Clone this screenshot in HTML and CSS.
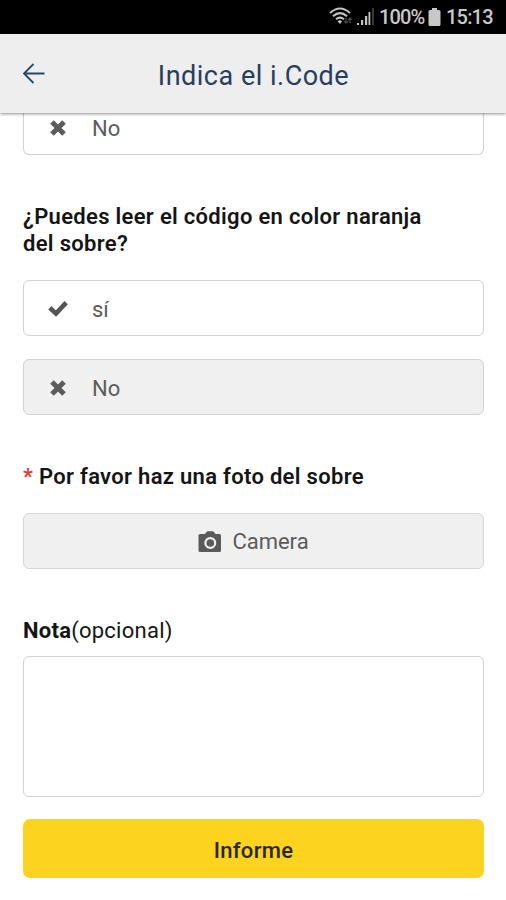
FILE: index.html
```html
<!DOCTYPE html>
<html lang="es">
<head>
<meta charset="utf-8">
<title>Indica el i.Code</title>
<link rel="stylesheet" href="styles.css">
</head>
<body>
<div class="status">
  <svg class="wifi" width="26" height="20" viewBox="0 0 26 20" fill="none" stroke="#c4c4c4" stroke-width="2">
    <path d="M1 6Q11 -3 21 6M4 9.300Q11 3 18 9.300M7 12.300Q11 9 15 12.300"/>
    <path d="M8.500 14.200Q11 12.500 13 14.200L11 17Z" fill="#c4c4c4" stroke="none"/>
    <path d="M17 11v5M15 14l2 2 2-2M21 16v-5M19 13l2-2 2 2" stroke="#444" stroke-width="1.300"/>
  </svg>
  <svg class="signal" width="19" height="18" viewBox="0 0 19 18">
    <path d="M1 15h2v2H1zM5 12h2.200v5H5zM9 8h2.200v9H9zM12.500 4h1.800v13h-1.800z" fill="#c4c4c4"/>
    <path d="M16 0h2v17h-2z" fill="#383838"/>
  </svg>
  <span class="percent">100%</span>
  <svg class="battery" width="13" height="18" viewBox="0 0 13 18" fill="#c8c8c8"><path d="M4 0h5v2h2q1.500 0 1.500 1.500v13q0 1.500-1.500 1.500H2Q.5 18 .5 16.500v-13Q.5 2 2 2h2z"/></svg>
  <span class="clock">15:13</span>
</div>
<header class="appbar">
  <svg class="back" width="24" height="22" viewBox="0 0 24 22" fill="none" stroke="#28486a" stroke-width="1.800"><path d="M22.500 10.500H2M11.500 1L2 10.500l9.500 9.500"/></svg>
  <h1 class="title">Indica el i.Code</h1>
</header>
<main class="form">
  <div class="option option-cut">
    <svg class="mark" width="20" height="18" viewBox="0 0 20 18" stroke="#5c5c5c" stroke-width="5"><path d="M4 3l12 12M16 3l-12 12"/></svg>
    <span>No</span>
  </div>
  <h2 class="question">¿Puedes leer el código en color naranja<br>del sobre?</h2>
  <div class="option">
    <svg class="mark" width="20" height="18" viewBox="0 0 20 18" fill="none" stroke="#555" stroke-width="4.600"><path d="M1.800 7.800l6.200 5.800L18.200 2.600"/></svg>
    <span>sí</span>
  </div>
  <div class="option option-selected">
    <svg class="mark" width="20" height="18" viewBox="0 0 20 18" stroke="#5c5c5c" stroke-width="5"><path d="M4 3l12 12M16 3l-12 12"/></svg>
    <span>No</span>
  </div>
  <h2 class="photo-label"><span class="required">*</span> Por favor haz una foto del sobre</h2>
  <div class="camera">
    <svg width="24" height="22" viewBox="0 0 24 22"><path d="M2 3h5l1.500-2q.5-.7 1.500-.7h4.500q1 0 1.500.7L17.500 3H21.500q1.500 0 1.500 1.500v15q0 1.500-1.500 1.500H2Q.5 21 .5 19.500v-15Q.5 3 2 3z" fill="#5a5a5a"/><circle cx="12.300" cy="12" r="4.900" fill="#5a5a5a" stroke="#f0f0f0" stroke-width="2.200"/></svg>
    <span>Camera</span>
  </div>
  <label class="note-label" for="note"><b>Nota</b>(opcional)</label>
  <textarea class="note" id="note"></textarea>
  <button class="submit" type="button">Informe</button>
</main>
</body>
</html>
```
FILE: styles.css
```css
* { box-sizing: border-box; }
body {
  margin: 0;
  height: 900px;
  overflow: hidden;
  background: #fff;
  color: #151515;
  font-family: Roboto, "Liberation Sans", sans-serif;
  font-size: 22px;
  line-height: 27px;
}
svg { display: block; flex: none; }
.status {
  display: flex;
  align-items: center;
  justify-content: flex-end;
  height: 34px;
  padding-right: 14px;
  background: #000;
  color: #c8c8c8;
  font-size: 20px;
  font-weight: 500;
}
.wifi { margin-right: 1px; }
.signal { margin-right: 4px; }
.percent, .clock { padding-top: 1px; white-space: nowrap; }
.percent { width: 45px; letter-spacing: -0.9px; }
.battery { margin: 0 5px 0 4px; }
.clock { width: 46px; letter-spacing: -0.8px; }
.appbar {
  position: relative;
  display: flex;
  align-items: center;
  height: 79px;
  padding-left: 22px;
  background: #eee;
  box-shadow: 0 1px 3px rgba(0, 0, 0, 0.45);
}
.title {
  flex: 1;
  margin: 4px 45px 0 0;
  color: #263e61;
  font-size: 27px;
  font-weight: 400;
  letter-spacing: 0.5px;
  line-height: 32px;
  text-align: center;
}
.form {
  display: flex;
  flex-direction: column;
  padding: 0 22px 0 23px;
}
.option {
  display: flex;
  align-items: center;
  gap: 24px;
  height: 56px;
  margin-bottom: 23px;
  padding: 2px 0 0 24px;
  border: 1.5px solid #d2d2d2;
  border-radius: 6px;
  color: #5b5b5b;
}
.option-cut {
  height: 42px;
  margin-bottom: 48px;
  padding: 0 0 11px 24px;
  border-top: 0;
  border-radius: 0 0 6px 6px;
}
.question, .photo-label {
  margin: 0;
  font-size: 22px;
  font-weight: 600;
  letter-spacing: 0.31px;
}
.question { margin-bottom: 23px; }
.option-selected { margin-bottom: 48px; background: #f0f0f0; }
.required { color: #e33b32; }
.photo-label { margin-bottom: 23px; }
.camera {
  display: flex;
  align-items: center;
  justify-content: center;
  gap: 10px;
  height: 56px;
  margin-bottom: 48px;
  padding-top: 1px;
  border: 1.5px solid #d6d6d6;
  border-radius: 6px;
  background: #f0f0f0;
  color: #5b5b5b;
}
.note-label { margin-bottom: 12px; letter-spacing: 0.25px; }
.note {
  display: block;
  width: 100%;
  height: 141px;
  margin: 0 0 22px;
  border: 1.5px solid #d2d2d2;
  border-radius: 6px;
  resize: none;
}
.submit {
  height: 59px;
  padding: 3px 0 0;
  border: 0;
  border-radius: 7px;
  background: #fcd41f;
  color: #2a2719;
  font: 500 22px/27px Roboto, "Liberation Sans", sans-serif;
  letter-spacing: 0.3px;
}
```
